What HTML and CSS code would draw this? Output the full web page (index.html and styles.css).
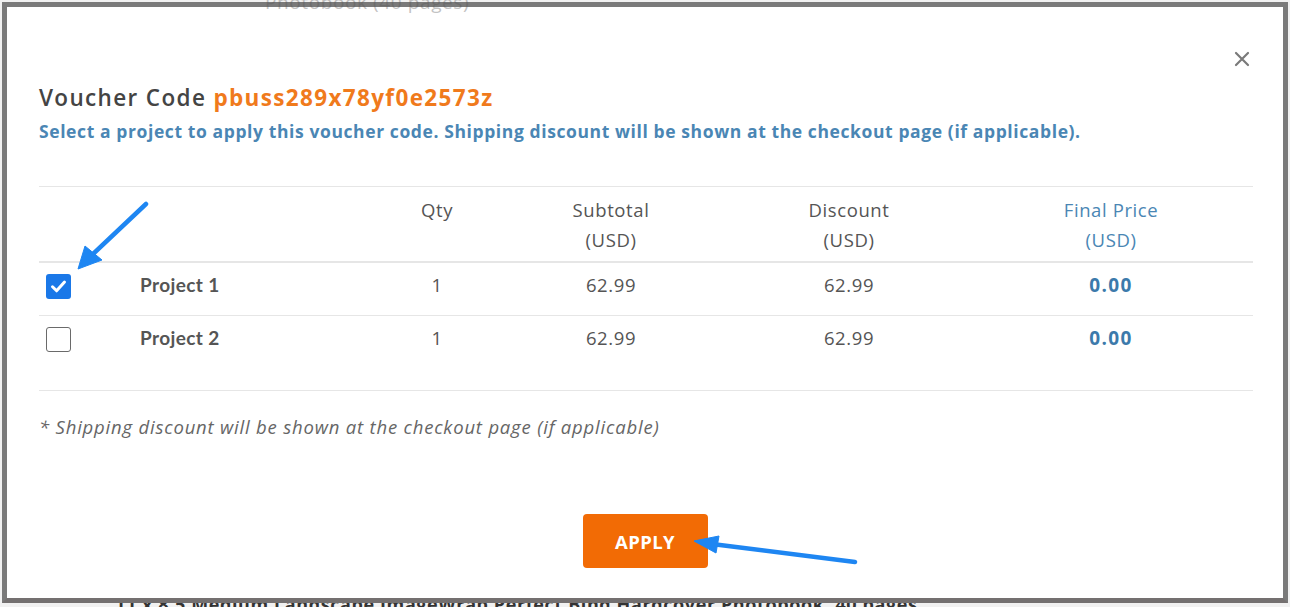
FILE: index.html
```html
<!DOCTYPE html>
<html>
<head>
<meta charset="utf-8">
<link rel="stylesheet" href="styles.css">
</head>
<body>
<div class="backdrop">
  <div class="bg-top">Photobook (40 pages)</div>
  <div class="bg-bottom">11 x 8.5 Medium Landscape ImageWrap Perfect Bind Hardcover Photobook, 40 pages</div>
</div>
<div class="modal">
  <div class="close-row">
    <svg class="close" width="16" height="16" viewBox="0 0 16 16"><path d="M2 2 L14 14 M14 2 L2 14" stroke="#7a7a7a" stroke-width="2.2" stroke-linecap="round"/></svg>
  </div>
  <h1 class="title">Voucher Code <span class="code">pbuss289x78yf0e2573z</span></h1>
  <p class="subtitle">Select a project to apply this voucher code. Shipping discount will be shown at the checkout page (if applicable).</p>

  <div class="table">
    <div class="row head">
      <div></div>
      <div></div>
      <div class="c">Qty</div>
      <div class="c">Subtotal<br>(USD)</div>
      <div class="c">Discount<br>(USD)</div>
      <div class="c blue">Final Price<br>(USD)</div>
      <div></div>
    </div>
    <div class="row item">
      <div><span class="cb checked"><svg width="25" height="25" viewBox="0 0 25 25"><path d="M6.5 12.8 L10.6 16.8 L18.5 8" fill="none" stroke="#fff" stroke-width="3" stroke-linecap="round" stroke-linejoin="round"/></svg></span></div>
      <div class="name">Project 1</div>
      <div class="c">1</div>
      <div class="c">62.99</div>
      <div class="c">62.99</div>
      <div class="c final">0.00</div>
      <div></div>
    </div>
    <div class="row item last">
      <div><span class="cb"></span></div>
      <div class="name">Project 2</div>
      <div class="c">1</div>
      <div class="c">62.99</div>
      <div class="c">62.99</div>
      <div class="c final">0.00</div>
      <div></div>
    </div>
  </div>

  <p class="note">* Shipping discount will be shown at the checkout page (if applicable)</p>

  <div class="actions">
    <button class="apply">APPLY</button>
  </div>

  <svg class="arrows" width="1290" height="607" viewBox="0 0 1290 607">
    <g fill="#1e86f2" stroke="#1e86f2">
      <line x1="146" y1="204" x2="92" y2="255" stroke-width="4.5" stroke-linecap="round"/>
      <polygon points="78,269 85,246 102,260" stroke-width="1" stroke-linejoin="round"/>
      <line x1="855" y1="562" x2="712" y2="544" stroke-width="4.5" stroke-linecap="round"/>
      <polygon points="694,541 719,536 716,553" stroke-width="1" stroke-linejoin="round"/>
    </g>
  </svg>
</div>
</body>
</html>
```
FILE: styles.css
```css
html, body {
  margin: 0;
  padding: 0;
}
body {
  width: 1290px;
  height: 607px;
  overflow: hidden;
  background: #f1f1f1;
  font-family: "Open Sans", "Liberation Sans", sans-serif;
  position: relative;
}
.backdrop {
  height: 607px;
}
.bg-top {
  position: absolute;
  left: 265px;
  top: -11px;
  font-size: 19px;
  letter-spacing: 0.6px;
  color: #555;
  z-index: 2;
  opacity: 0.35;
}
.bg-bottom {
  position: absolute;
  left: 115px;
  top: 592px;
  font-size: 18px;
  letter-spacing: 0.6px;
  font-weight: 700;
  color: #333;
}
.modal {
  position: absolute;
  left: 2px;
  top: 2px;
  width: 1286px;
  height: 601px;
  box-sizing: border-box;
  border: 5px solid #7a7a7a;
  border-bottom-color: #747070;
  background: #fff;
  padding: 0 30px 0 32px;
}
.close-row {
  display: flex;
  justify-content: flex-end;
  padding-top: 44px;
  padding-right: 3px;
  height: 16px;
}
.close {
  display: block;
}
.title {
  margin: 17px 0 0;
  font-size: 22.5px;
  line-height: 28px;
  font-weight: 600;
  letter-spacing: 1.35px;
  color: #444;
}
.code {
  color: #f07a1c;
  font-weight: 700;
}
.subtitle {
  margin: 7px 0 0;
  font-size: 17.5px;
  line-height: 24px;
  font-weight: 700;
  letter-spacing: 0.6px;
  color: #4a86b4;
}
.table {
  margin-top: 43px;
  border-top: 1px solid #e6e6e6;
  border-bottom: 1px solid #e6e6e6;
  padding-bottom: 21px;
}
.row {
  display: grid;
  grid-template-columns: 101px 200px 194px 154px 322px 202px 1fr;
  color: #555;
  font-size: 18.5px;
  letter-spacing: 0.6px;
}
.row.head {
  padding-top: 8px;
  height: 66px;
  line-height: 30px;
  border-bottom: 2px solid #e6e6e6;
}
.row.item {
  height: 53px;
  box-sizing: border-box;
  padding-top: 11px;
  line-height: 22px;
}
.row.item:not(.last) {
  border-bottom: 1px solid #e6e6e6;
}
.c {
  text-align: center;
}
.blue {
  color: #4a86b4;
}
.name {
  font-family: "Lato", sans-serif;
  font-weight: 700;
  font-size: 19px;
  letter-spacing: 0.4px;
  color: #555;
}
.final {
  color: #3c7aab;
  font-weight: 700;
  font-size: 19px;
  letter-spacing: 1.4px;
}
.cb {
  display: block;
  width: 25px;
  height: 25px;
  margin-left: 7px;
  box-sizing: border-box;
  border: 1.5px solid #6a6a6a;
  border-radius: 3px;
  background: #fff;
}
.cb.checked {
  border: none;
  background: #1a78e8;
}
.cb svg {
  display: block;
}
.note {
  margin: 24px 0 0;
  font-size: 18.5px;
  line-height: 24px;
  font-style: italic;
  letter-spacing: 0.8px;
  color: #666;
}
.actions {
  display: flex;
  justify-content: center;
  margin-top: 75px;
  padding-right: 2px;
}
.apply {
  width: 125px;
  height: 54px;
  border: none;
  border-radius: 4px;
  background: #f26b05;
  color: #fff;
  font-family: "Open Sans", sans-serif;
  font-weight: 700;
  font-size: 18.5px;
  letter-spacing: 0.4px;
  padding: 0;
}
.arrows {
  position: absolute;
  left: -7px;
  top: -7px;
  pointer-events: none;
}
```
